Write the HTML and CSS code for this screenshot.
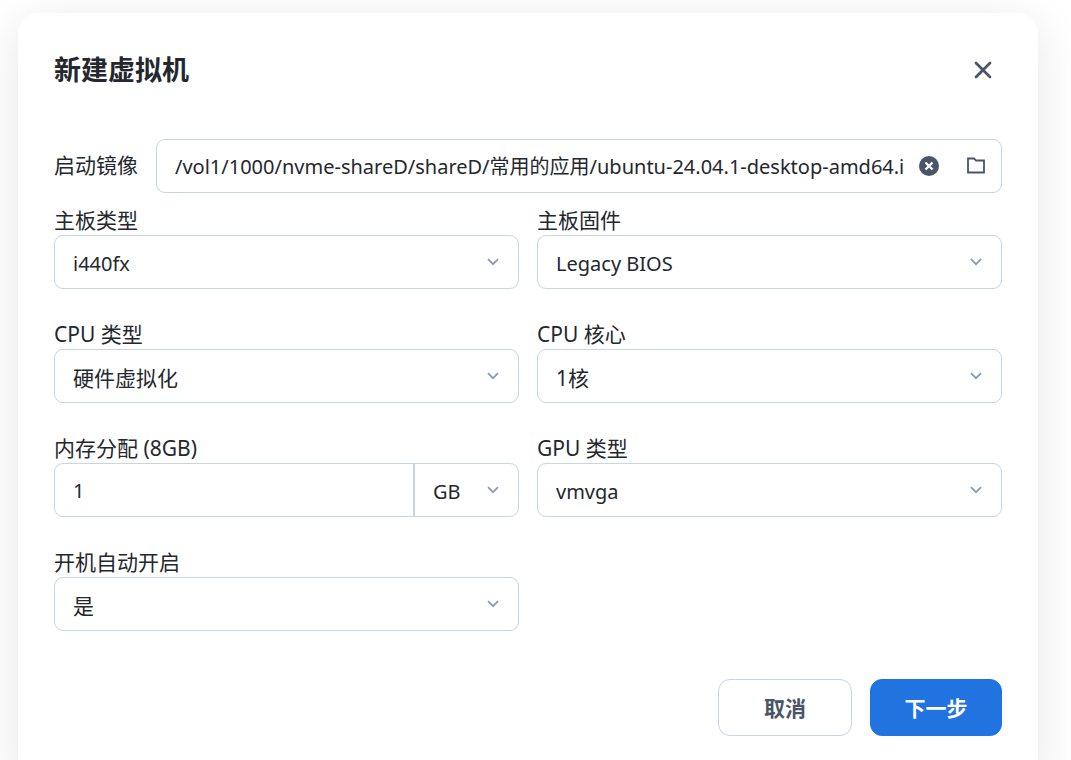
FILE: index.html
```html
<!DOCTYPE html>
<html lang="zh-CN">
<head>
  <meta charset="UTF-8" />
  <meta name="viewport" content="width=device-width, initial-scale=1.0" />
  <title>新建虚拟机</title>
  <link rel="stylesheet" href="styles.css">
</head>
<body>
  <svg width="0" height="0" class="sprite" aria-hidden="true">
    <symbol id="chevron" viewBox="0 0 12 8">
      <path d="M1 1.2 L6 6.2 L11 1.2" fill="none" stroke="currentColor" stroke-width="1.8" />
    </symbol>
  </svg>

  <form class="dialog">
    <header class="dialog-header">
      <h1>新建虚拟机</h1>
      <button type="button" class="icon-btn close" aria-label="关闭">
        <svg width="18" height="18" viewBox="0 0 18 18">
          <path d="M2 2 L16 16 M16 2 L2 16" stroke="currentColor" stroke-width="2.8" stroke-linecap="round" />
        </svg>
      </button>
    </header>

    <div class="image-row">
      <label for="image">启动镜像</label>
      <div class="control path-box">
        <input type="text" id="image" name="image" value="/vol1/1000/nvme-shareD/shareD/常用的应用/ubuntu-24.04.1-desktop-amd64.iso">
        <button type="button" class="icon-btn" aria-label="清除">
          <svg width="20" height="20" viewBox="0 0 20 20">
            <circle cx="10" cy="10" r="10" fill="currentColor" />
            <path d="M6.5 6.5 L13.5 13.5 M13.5 6.5 L6.5 13.5" stroke="#fff" stroke-width="2.4" />
          </svg>
        </button>
        <button type="button" class="icon-btn folder" aria-label="选择文件">
          <svg width="18" height="18" viewBox="0 0 18 18">
            <path d="M1 1.5 H7 L9 3.5 H17 V15.5 H1 Z" fill="none" stroke="currentColor" stroke-width="1.8" />
          </svg>
        </button>
      </div>
    </div>

    <div class="grid">
      <div class="field">
        <label for="board">主板类型</label>
        <div class="control">
          <select id="board" name="board">
            <option>i440fx</option>
            <option>q35</option>
          </select>
          <svg class="arrow"><use href="#chevron" /></svg>
        </div>
      </div>

      <div class="field">
        <label for="firmware">主板固件</label>
        <div class="control">
          <select id="firmware" name="firmware">
            <option>Legacy BIOS</option>
            <option>UEFI</option>
          </select>
          <svg class="arrow"><use href="#chevron" /></svg>
        </div>
      </div>

      <div class="field">
        <label for="cpu-type">CPU 类型</label>
        <div class="control">
          <select id="cpu-type" name="cpu-type" class="cjk">
            <option>硬件虚拟化</option>
          </select>
          <svg class="arrow"><use href="#chevron" /></svg>
        </div>
      </div>

      <div class="field">
        <label for="cpu-cores">CPU 核心</label>
        <div class="control">
          <select id="cpu-cores" name="cpu-cores" class="cjk">
            <option>1核</option>
            <option>2核</option>
          </select>
          <svg class="arrow"><use href="#chevron" /></svg>
        </div>
      </div>

      <div class="field">
        <label for="memory">内存分配 (8GB)</label>
        <div class="control memory">
          <input type="text" id="memory" name="memory" value="1">
          <div class="unit">
            <select name="memory-unit" aria-label="内存单位">
              <option>GB</option>
              <option>MB</option>
            </select>
            <svg class="arrow"><use href="#chevron" /></svg>
          </div>
        </div>
      </div>

      <div class="field">
        <label for="gpu">GPU 类型</label>
        <div class="control">
          <select id="gpu" name="gpu">
            <option>vmvga</option>
          </select>
          <svg class="arrow"><use href="#chevron" /></svg>
        </div>
      </div>

      <div class="field">
        <label for="autostart">开机自动开启</label>
        <div class="control">
          <select id="autostart" name="autostart" class="cjk">
            <option>是</option>
            <option>否</option>
          </select>
          <svg class="arrow"><use href="#chevron" /></svg>
        </div>
      </div>
    </div>

    <footer class="actions">
      <button type="button" class="btn">取消</button>
      <button type="submit" class="btn primary">下一步</button>
    </footer>
  </form>
</body>
</html>
```

FILE: styles.css
```css
* {
  box-sizing: border-box;
}
body {
  margin: 0;
  height: 100vh;
  overflow: hidden;
  padding: 13px 33px 0 18px;
  background: #fff;
  color: #24272e;
  font-family: "Noto Sans", "Noto Sans CJK SC", sans-serif;
  font-size: 20px;
  line-height: 28px;
}
input, select, button {
  font: inherit;
  color: inherit;
  background: none;
  border: none;
  padding: 0;
  margin: 0;
  outline: none;
}
.sprite {
  position: absolute;
}
.dialog {
  background: #fff;
  border-radius: 20px;
  padding: 36px 36px 54px;
  box-shadow: 0 10px 48px rgba(0, 0, 0, 0.1);
}
.dialog-header {
  display: flex;
  align-items: center;
  justify-content: space-between;
  height: 42px;
  margin-bottom: 48px;
}
h1 {
  margin: 0;
  font-size: 27px;
  font-weight: bold;
}
.icon-btn {
  display: flex;
  color: #4a5568;
  cursor: pointer;
}
.close {
  padding: 10px;
}
.image-row {
  display: flex;
  align-items: center;
  gap: 18px;
  margin-bottom: 14px;
}
label {
  display: block;
  padding-bottom: 2px;
  font-size: 21px;
  line-height: 26px;
}
.control {
  position: relative;
  display: flex;
  align-items: center;
  height: 54px;
  border: 1px solid #c9d5e2;
  border-radius: 9px;
}
.path-box {
  flex: 1;
  min-width: 0;
  padding: 0 16px 0 18px;
}
input {
  flex: 1;
  min-width: 0;
  padding-top: 2px;
}
.path-box input {
  margin-right: 14px;
}
.folder {
  margin-left: 28px;
}
.grid {
  display: grid;
  grid-template-columns: 1fr 1fr;
  gap: 32px 18px;
}
select {
  appearance: none;
  width: 100%;
  height: 100%;
  padding: 4px 40px 0 18px;
}
.cjk {
  font-size: 21px;
}
.arrow {
  position: absolute;
  right: 19px;
  top: 22px;
  width: 12px;
  height: 8px;
  color: #8a9bb4;
  pointer-events: none;
}
.memory input {
  padding-left: 18px;
}
.unit {
  position: relative;
  width: 105px;
  height: 100%;
  border-left: 2px solid #c9d5e2;
}
.actions {
  display: flex;
  justify-content: flex-end;
  gap: 18px;
  margin-top: 48px;
}
.btn {
  width: 134px;
  height: 57px;
  border: 1px solid #c9d5e2;
  border-radius: 12px;
  font-size: 21px;
  font-weight: bold;
  color: #4a5568;
  cursor: pointer;
}
.primary {
  width: 132px;
  border-color: #2173df;
  background: #2173df;
  color: #fff;
}
```
